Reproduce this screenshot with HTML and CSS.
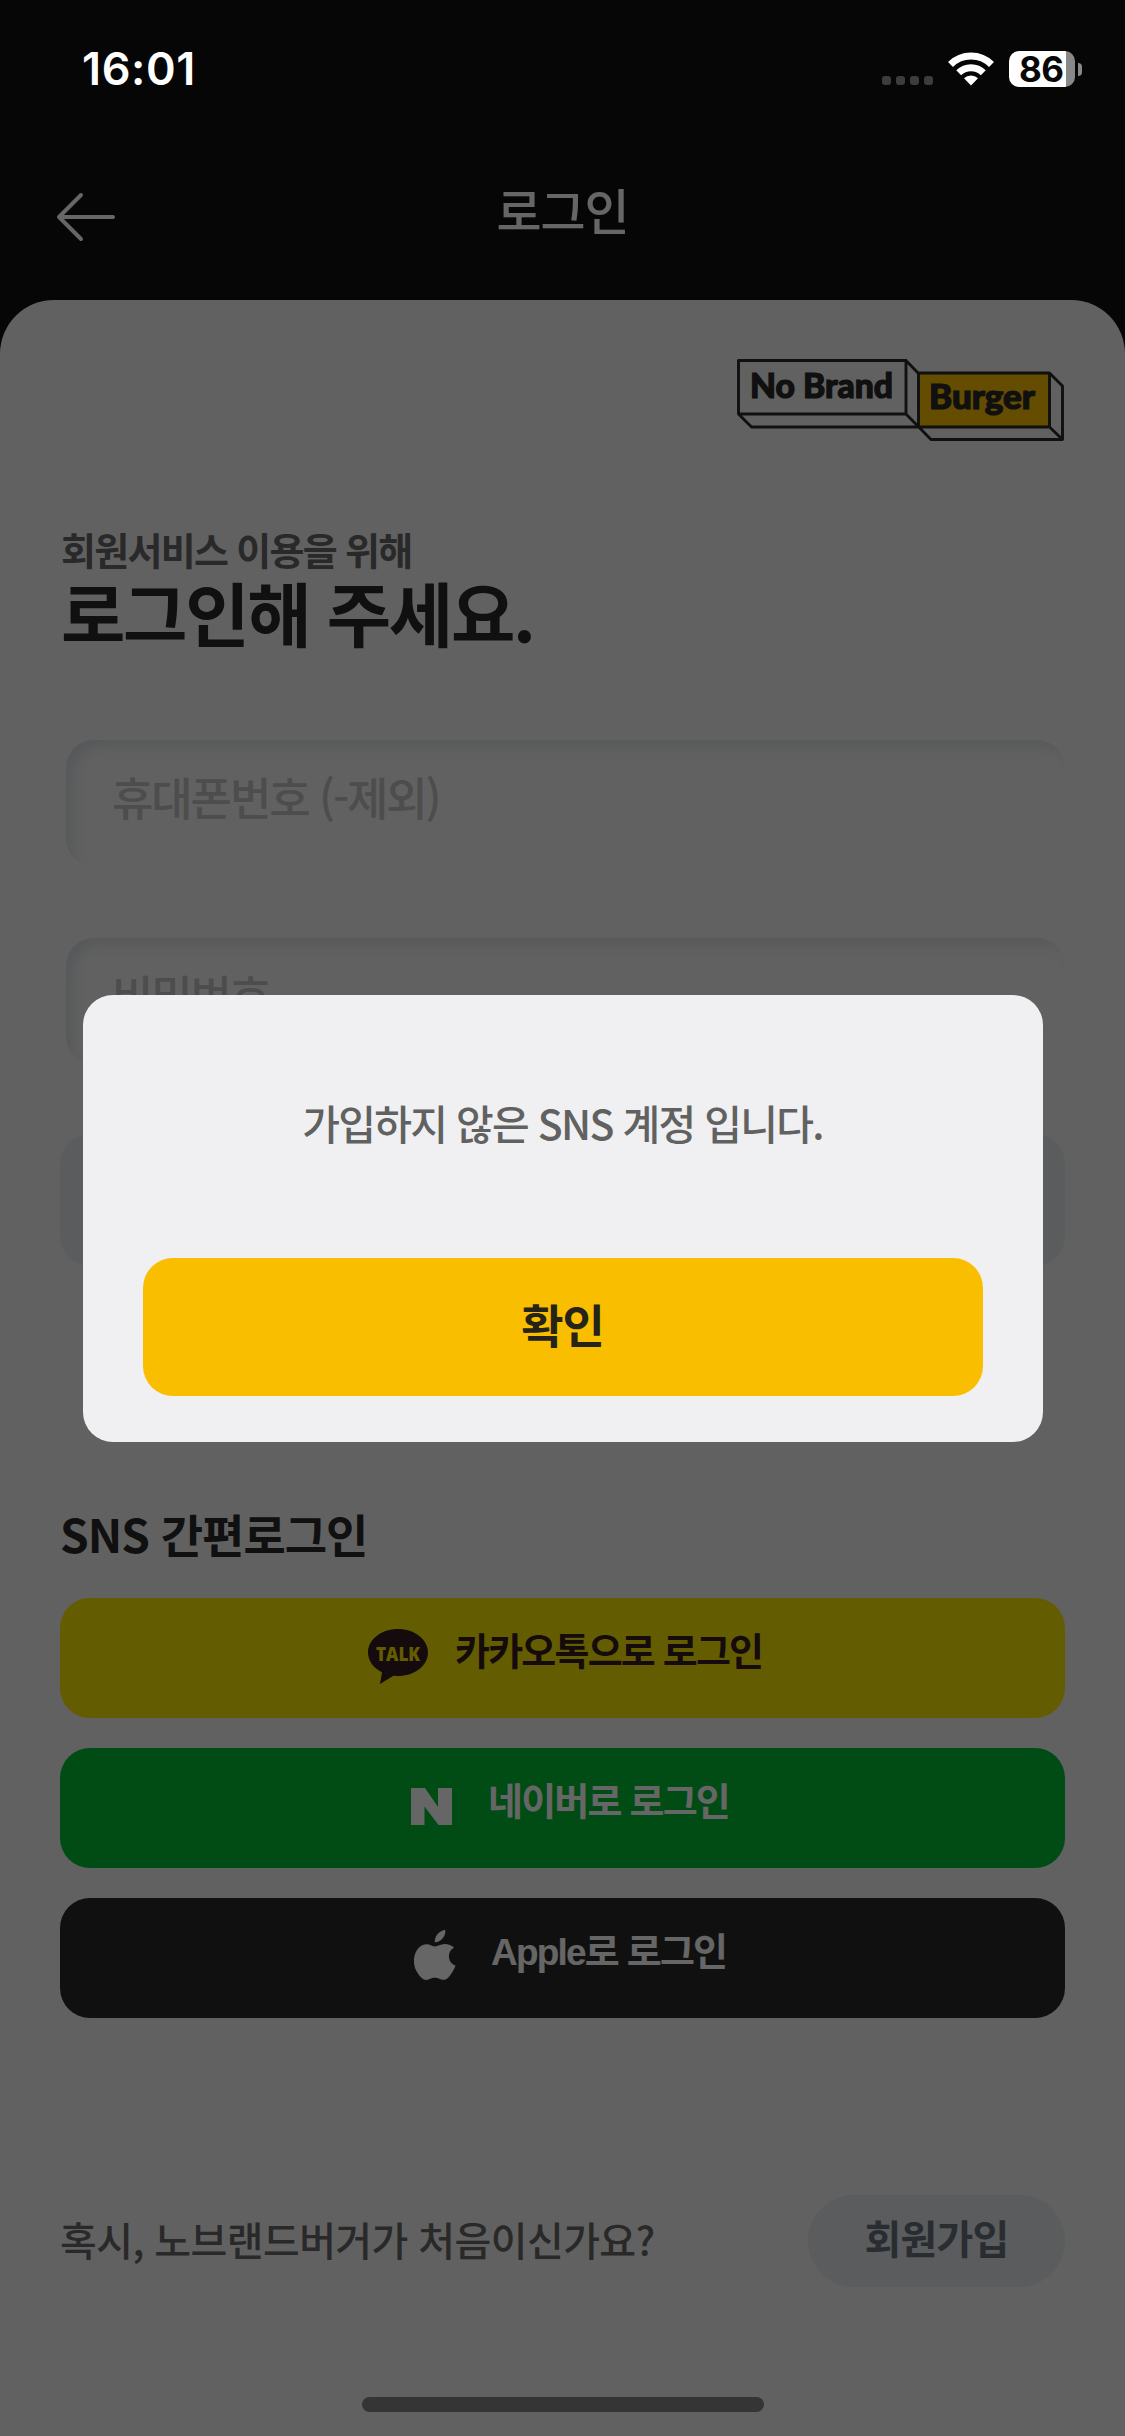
FILE: index.html
```html
<!DOCTYPE html>
<html lang="ko">
<head>
<meta charset="utf-8">
<title>로그인</title>
<link rel="stylesheet" href="styles.css">
</head>
<body>
<div class="screen">
  <header class="top">
    <div class="nav">
      <svg class="back" width="62" height="52" viewBox="0 0 62 52"><path d="M58 26H4M26 4 4 26l22 22" fill="none" stroke="#fff" stroke-width="4" stroke-linecap="round" stroke-linejoin="round"/></svg>
      <h1 class="nav-title">로그인</h1>
    </div>
  </header>
  <main class="sheet">
    <svg class="logo" width="328" height="84" viewBox="0 0 328 84">
      <path d="M181.500 16h131v54h-131z" fill="#fabe00"/>
      <path d="M1.500 3.500h167.500v53.500H1.500zM169 3.500l12.500 13M1.500 57l13 13h167M169 57l25 25.500h131.500V29L312.500 16H181.500v54h131V16M312.500 70l13 12.500" fill="none" stroke="#2a2a2a" stroke-width="2.9" stroke-linejoin="round"/>
      <text class="logo-text" x="13" y="41" textLength="143" lengthAdjust="spacingAndGlyphs">No Brand</text>
      <text class="logo-text" x="192" y="52" textLength="106" lengthAdjust="spacingAndGlyphs">Burger</text>
    </svg>
    <p class="lead">회원서비스 이용을 위해</p>
    <h2 class="headline">로그인해 주세요.</h2>
    <div class="field"><span class="placeholder">휴대폰번호 (-제외)</span></div>
    <div class="field"><span class="placeholder">비밀번호</span></div>
    <div class="submit"></div>
    <h3 class="sns-title">SNS 간편로그인</h3>
    <div class="sns-list">
      <div class="sns kakao">
        <svg width="60" height="56" viewBox="0 0 60 56"><path d="M30 0C13.400 0 0 10.500 0 23.500c0 8.300 5.500 15.600 14 19.800L12 55l13.500-8.200c1.500.1 3 .2 4.500.2 16.600 0 30-10.500 30-23.500S46.600 0 30 0z" fill="#371d1e"/><text class="talk" x="8" y="31.500" textLength="44" lengthAdjust="spacingAndGlyphs">TALK</text></svg>
        <span>카카오톡으로 로그인</span>
      </div>
      <div class="sns naver">
        <svg width="41" height="37" viewBox="0 0 41 37"><path d="M0 0h14l13 19V0h14v37H27.500L13.500 18.500V37H0z" fill="#fff"/></svg>
        <span>네이버로 로그인</span>
      </div>
      <div class="sns apple">
        <svg width="42" height="51" viewBox="0 0 42 51"><path d="M31.300 0c.4 3.200-.9 6.300-2.800 8.500-1.900 2.300-4.900 3.900-7.700 3.700-.4-3.100 1.100-6.200 2.800-8.200C25.500 1.800 28.700.1 31.300 0zM40 17.600c-3.200 2-5.100 4.700-5.100 8.600 0 4.400 2.600 7.900 6.600 9.400-.8 2.600-2.100 5.100-3.700 7.400-2.300 3.300-4.600 6.800-8.300 6.800-3.600 0-4.500-2-8.700-2-4 0-5.400 2.100-8.700 2.100-3.600.1-6.300-3.500-8.500-6.800C.400 38.400-1.300 31.700.900 24.500c1.800-5.900 6.300-10.300 11.600-10.300 3.600 0 6.500 2.300 8.700 2.300 2.100 0 5.300-2.500 9.600-2.500 3.300 0 6.800 1.200 9.200 3.600z" fill="#fff"/></svg>
        <span><b>Apple</b>로 로그인</span>
      </div>
    </div>
    <footer class="join">
      <span class="join-text">혹시, 노브랜드버거가 처음이신가요?</span>
      <span class="join-btn">회원가입</span>
    </footer>
  </main>
  <div class="dim">
    <section class="modal">
      <p class="modal-text">가입하지 않은 SNS 계정 입니다.</p>
      <div class="modal-btn"><span>확인</span></div>
    </section>
  </div>
  <div class="status">
    <span class="clock">16:01</span>
    <div class="status-icons">
      <div class="dots"><i></i><i></i><i></i><i></i></div>
      <svg class="wifi" width="46" height="34" viewBox="0 0 46 34"><g fill="none" stroke="#fff" stroke-width="7"><path d="M2.500 12.500a29 29 0 0 1 41 0"/><path d="M10.700 20.800a17.500 17.500 0 0 1 24.600 0"/></g><path d="M23 33.500l-7-7.200a10 10 0 0 1 14 0z" fill="#fff"/></svg>
      <div class="battery"><span>86</span></div>
      <div class="nub"></div>
    </div>
  </div>
  <div class="home-bar"></div>
</div>
</body>
</html>
```
FILE: styles.css
```css
* { box-sizing: border-box; }
body { margin: 0; font-family: "Noto Sans CJK KR", "Liberation Sans", sans-serif; }
h1, h2, h3, p { margin: 0; }
svg { display: block; flex: none; }
span, h1, h2, h3, p { white-space: nowrap; }
.screen { position: relative; width: 1125px; height: 2436px; overflow: hidden; background: #101010; display: flex; flex-direction: column; }

.top { height: 300px; padding-top: 160px; }
.nav { display: grid; grid-template-columns: 200px 1fr 200px; height: 110px; }
.back { margin: 31px 0 0 55px; }
.nav-title { text-align: center; color: #fff; font-size: 49px; font-weight: 500; line-height: 70px; padding-top: 14px; letter-spacing: -1px; }

.sheet { flex: 1; background: #f2f2f2; border-radius: 54px 54px 0 0; padding: 57px 60px 0; display: flex; flex-direction: column; }
.logo { align-self: flex-end; }
.logo-text { font-family: Lato, sans-serif; font-weight: 900; font-size: 34px; fill: #282828; stroke: #282828; stroke-width: 1.2px; }
.lead { margin-top: 80px; height: 56px; line-height: 56px; font-size: 38px; font-weight: 700; letter-spacing: -1.7px; color: #686868; padding-left: 1px; }
.headline { margin-top: -4px; height: 79px; line-height: 77px; font-size: 70px; font-weight: 700; letter-spacing: -2.3px; color: #282828; padding-left: 1px; }
.field { height: 126px; margin: 88px 0 0 6px; padding: 0 0 13px 46px; border-radius: 28px; display: flex; align-items: center; box-shadow: inset 9px 9px 13px -3px #d7dbe0; }
.field + .field { margin-top: 72px; }
.placeholder { font-size: 45px; font-weight: 500; letter-spacing: -2.1px; color: #c0c0c0; }
.submit { margin-top: 70px; height: 132px; border-radius: 30px; background: #e3e6e9; }
.sns-title { margin-top: 234px; height: 66px; line-height: 66px; font-size: 46px; font-weight: 700; letter-spacing: -1px; color: #282828; }
.sns-list { margin-top: 32px; display: flex; flex-direction: column; gap: 30px; }
.sns { height: 120px; border-radius: 30px; display: flex; align-items: flex-start; color: #fff; font-size: 38px; font-weight: 700; letter-spacing: -1.8px; }
.sns span { line-height: 56px; margin-top: 23px; }
.sns b { font-family: "Liberation Sans", sans-serif; font-size: 37px; }
.kakao { background: #fae600; color: #371d1e; padding-left: 308px; gap: 27px; }
.kakao svg { margin-top: 31px; }
.talk { font-family: "Open Sans", sans-serif; font-weight: 800; font-size: 20px; letter-spacing: 0; fill: #fae600; }
.naver { background: #00be32; padding-left: 351px; gap: 36px; }
.naver svg { margin-top: 40px; }
.apple { background: #2a2a2a; padding-left: 354px; gap: 35px; }
.apple svg { margin-top: 32px; }
.join { margin-top: 177px; display: flex; justify-content: space-between; align-items: flex-start; color: #686868; }
.join-text { font-size: 40px; font-weight: 500; line-height: 60px; margin-top: 14px; letter-spacing: -.6px; }
.join-btn { width: 257px; height: 92px; border-radius: 46px; background: #e1e5e8; color: #68727a; font-size: 40px; font-weight: 700; line-height: 84px; letter-spacing: -.8px; text-align: center; }

.dim { position: absolute; inset: 0; background: rgba(0, 0, 0, .6); display: flex; align-items: center; justify-content: center; }
.modal { width: 960px; height: 447px; border-radius: 30px; background: #f0f0f2; padding: 97px 60px 0; display: flex; flex-direction: column; }
.modal-text { text-align: center; font-size: 41px; font-weight: 500; line-height: 60px; height: 166px; letter-spacing: -1.7px; color: #616161; }
.modal-btn { height: 138px; border-radius: 30px; background: #f9be00; color: #262419; font-size: 46px; font-weight: 700; line-height: 130px; letter-spacing: -1px; text-align: center; }

.status { position: absolute; inset: 0 0 auto; height: 120px; padding: 51px 43px 0 82px; display: flex; justify-content: space-between; color: #fff; font-family: Inter, sans-serif; }
.clock { font-size: 45px; font-weight: 600; line-height: 36px; letter-spacing: .6px; }
.status-icons { display: flex; height: 36px; align-items: center; }
.dots { display: flex; gap: 5px; margin: 22px 15px 0 0; }
.dots i { width: 9px; height: 9px; border-radius: 3px; background: #3c3c3c; }
.battery { margin-left: 15px; width: 66px; height: 36px; border-radius: 10px; background: linear-gradient(90deg, #fff 57px, #888 57px); color: #080808; font-size: 35px; font-weight: 700; line-height: 36px; padding-left: 10px; letter-spacing: -.5px; }
.nub { margin-left: 3px; width: 4px; height: 13px; border-radius: 0 6px 6px 0; background: #888; }
.home-bar { position: absolute; left: 362px; bottom: 24px; width: 402px; height: 15px; border-radius: 8px; background: #353535; }
```
